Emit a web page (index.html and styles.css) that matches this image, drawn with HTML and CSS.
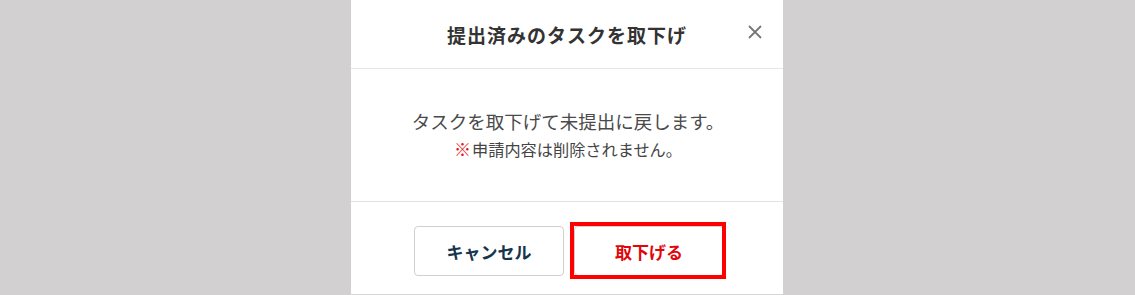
FILE: index.html
```html
<!DOCTYPE html>
<html lang="ja">
<head>
<meta charset="utf-8">
<title>提出済みのタスクを取下げ</title>
<link rel="stylesheet" href="styles.css">
</head>
<body>
<div class="overlay">
  <div class="modal">
    <div class="modal-header">
      <h2 class="modal-title">提出済みのタスクを取下げ</h2>
      <button class="close-btn" aria-label="閉じる">
        <svg width="14" height="14" viewBox="0 0 14 14"><path d="M1 1L13 13M13 1L1 13" stroke="#777" stroke-width="1.8" fill="none"/></svg>
      </button>
    </div>
    <div class="modal-body">
      <p class="msg">タスクを取下げて未提出に戻します。</p>
      <p class="note"><span class="mark">※</span>申請内容は削除されません。</p>
    </div>
    <div class="modal-footer">
      <button class="btn btn-cancel">キャンセル</button>
      <button class="btn btn-danger">取下げる<span class="highlight"></span></button>
    </div>
  </div>
</div>
</body>
</html>
```

FILE: styles.css
```css
html, body {
  margin: 0;
  padding: 0;
  height: 100%;
}
body {
  background: #d2d0d1;
  font-family: "Noto Sans CJK JP", "Noto Sans", sans-serif;
  overflow: hidden;
}
.overlay {
  display: flex;
  justify-content: center;
}
.modal {
  width: 432px;
  height: 295px;
  background: #fff;
  box-sizing: border-box;
  border-bottom: 1px solid #d6d6d6;
  display: flex;
  flex-direction: column;
  margin-left: -1px;
}
.modal-header {
  position: relative;
  height: 68px;
  flex: none;
  border-bottom: 1px solid #e6e6e6;
  display: flex;
  align-items: center;
  justify-content: center;
}
.modal-title {
  margin: 0;
  font-size: 19px;
  letter-spacing: 1px;
  font-weight: 700;
  color: #333;
  line-height: 1;
  padding-left: 0;
  padding-top: 1px;
}
.close-btn {
  position: absolute;
  right: 21px;
  top: 25px;
  width: 14px;
  height: 14px;
  padding: 0;
  border: 0;
  background: none;
  display: block;
}
.close-btn svg { display: block; }
.modal-body {
  height: 132px;
  flex: none;
  border-bottom: 1px solid #e2e2e2;
  display: flex;
  flex-direction: column;
  align-items: center;
  justify-content: center;
}
.msg {
  margin: 0;
  font-size: 18.5px;
  line-height: 28px;
  color: #4a4a4a;
  padding-left: 2px;
}
.note {
  margin: 0;
  font-size: 16.2px;
  line-height: 27px;
  color: #444;
  padding-left: 2px;
}
.mark {
  color: #e8141b;
  font-weight: 700;
  font-size: 17px;
  margin-right: 1px;
}
.modal-footer {
  flex: 1;
  display: flex;
  justify-content: center;
  align-items: flex-start;
  gap: 10px;
  padding-top: 24px;
  padding-left: 4px;
}
.btn {
  position: relative;
  width: 150px;
  height: 50px;
  box-sizing: border-box;
  border: 1px solid #cfcfcf;
  border-radius: 4px;
  background: #fff;
  font-family: "Noto Sans CJK JP", "Noto Sans", sans-serif;
  font-size: 17px;
  font-weight: 700;
  padding: 0;
}
.btn-cancel {
  color: #16354d;
}
.btn-danger {
  color: #e0060c;
}
.highlight {
  position: absolute;
  left: -5px;
  top: -5px;
  width: 156px;
  height: 57px;
  box-sizing: border-box;
  border: 4px solid #ff0000;
  pointer-events: none;
}
```
